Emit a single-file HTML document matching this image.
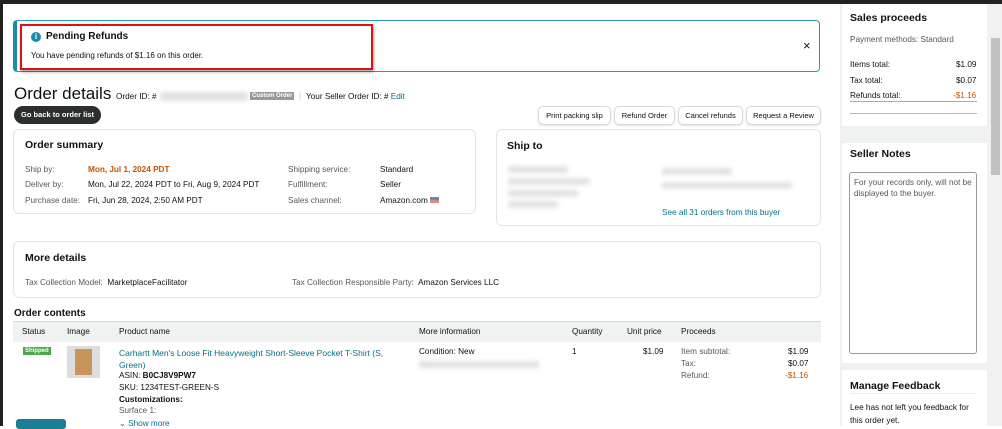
<!DOCTYPE html>
<html><head><meta charset="utf-8"><style>
*{box-sizing:border-box;margin:0;padding:0}
body{width:1002px;height:426px;overflow:hidden;background:#fff;font-family:"Liberation Sans",Arial,sans-serif;color:#0f1111;position:relative;font-size:8.2px}
.a{position:absolute;white-space:nowrap}
.box{position:absolute;border:1px solid #e3e6e6;border-radius:6px;background:#fff}
.g{color:#565959}
.lnk{color:#007185}
.btn{position:absolute;top:106px;height:19px;border:1px solid #d5d9d9;border-radius:5px;font-size:7.5px;line-height:17px;text-align:center;background:#fff;box-shadow:0 1px 2px rgba(0,0,0,.1)}
.blur{position:absolute;background:#e2e2e2;filter:blur(2px);border-radius:2px}
.h{font-weight:bold;font-size:10.5px}
</style></head><body>
<div class="a" style="left:0;top:0;width:1002px;height:4px;background:#222"></div>
<div class="a" style="left:0;top:0;width:3px;height:426px;background:#222"></div>
<div class="a" style="left:987px;top:4px;width:15px;height:422px;background:#f1f1f1"></div>
<div class="a" style="left:991px;top:38px;width:9px;height:137px;background:#c1c1c1"></div>
<div class="a" style="left:840px;top:4px;width:147px;height:422px;background:#f0f2f2"></div>
<div class="a" style="left:842px;top:4px;width:145px;height:122px;background:#fff"></div>
<div class="a" style="left:842px;top:143px;width:145px;height:220px;background:#fff"></div>
<div class="a" style="left:842px;top:370px;width:145px;height:56px;background:#fff"></div>
<div class="a h" style="left:850px;top:12px">Sales proceeds</div>
<div class="a g" style="left:850px;top:35px">Payment methods: Standard</div>
<div class="a" style="left:850px;top:60px">Items total:</div><div class="a" style="left:956px;top:60px">$1.09</div>
<div class="a" style="left:850px;top:76px">Tax total:</div><div class="a" style="left:956px;top:76px">$0.07</div>
<div class="a" style="left:850px;top:91px">Refunds total:</div><div class="a" style="left:953px;top:91px;color:#c45500">-$1.16</div>
<div class="a" style="left:850px;top:101px;width:127px;border-top:1px solid #aaa"></div>
<div class="a" style="left:850px;top:113px;width:127px;border-top:1px solid #bbb"></div>
<div class="a h" style="left:850px;top:148px">Seller Notes</div>
<div class="a" style="left:849px;top:172px;width:128px;height:182px;border:1px solid #999;border-radius:3px;white-space:normal;padding:4px 4px;color:#565959;line-height:11px">For your records only, will not be displayed to the buyer.</div>
<div class="a h" style="left:850px;top:380px">Manage Feedback</div>
<div class="a" style="left:850px;top:393px;width:127px;border-top:1px solid #eee"></div>
<div class="a" style="left:850px;top:401px;line-height:13px;white-space:normal;width:130px">Lee has not left you feedback for this order yet.</div>
<div class="a" style="left:13px;top:20px;width:807px;height:52px;border:1px solid #2a9bb0;border-left:4px solid #1a8ca3;border-radius:4px"></div>
<div class="a" style="left:20px;top:24px;width:353px;height:46px;border:2px solid #e01010;box-shadow:1px 2px 3px rgba(0,0,0,.35)"></div>
<div class="a" style="left:31px;top:32px;width:10px;height:10px;border-radius:50%;background:#1a8ca3;color:#fff;font-size:8px;font-weight:bold;text-align:center;line-height:10px">i</div>
<div class="a" style="left:46px;top:31px;font-weight:bold;font-size:10px">Pending Refunds</div>
<div class="a" style="left:31px;top:51px;font-size:8px">You have pending refunds of $1.16 on this order.</div>
<div class="a" style="left:803px;top:38px;font-size:13px">×</div>
<div class="a" style="left:14px;top:84px;font-size:17px">Order details</div>
<div class="a" style="left:116px;top:92px">Order ID: #</div>
<div class="blur" style="left:160px;top:92px;width:88px;height:9px"></div>
<div class="a" style="left:250px;top:92px;background:#999;color:#fff;font-size:6px;padding:1px 2px;font-weight:bold">Custom Order</div>
<div class="a" style="left:299px;top:91px;color:#ccc">|</div>
<div class="a" style="left:306px;top:92px">Your Seller Order ID: # <span class="lnk">Edit</span></div>
<div class="a" style="left:14px;top:106px;width:87px;height:18px;border-radius:9px;background:#2b2f2f;color:#fff;font-weight:bold;font-size:7.5px;line-height:18px;text-align:center">Go back to order list</div>
<div class="btn" style="left:538px;width:73px">Print packing slip</div>
<div class="btn" style="left:614px;width:61px">Refund Order</div>
<div class="btn" style="left:678px;width:65px">Cancel refunds</div>
<div class="btn" style="left:746px;width:75px">Request a Review</div>
<div class="box" style="left:13px;top:129px;width:463px;height:85px"></div>
<div class="a h" style="left:25px;top:139px">Order summary</div>
<div class="a g" style="left:25px;top:165px">Ship by:</div><div class="a" style="left:88px;top:165px;color:#c45500;font-weight:bold">Mon, Jul 1, 2024 PDT</div>
<div class="a g" style="left:25px;top:180px">Deliver by:</div><div class="a" style="left:88px;top:180px">Mon, Jul 22, 2024 PDT to Fri, Aug 9, 2024 PDT</div>
<div class="a g" style="left:25px;top:196px">Purchase date:</div><div class="a" style="left:88px;top:196px">Fri, Jun 28, 2024, 2:50 AM PDT</div>
<div class="a g" style="left:288px;top:165px">Shipping service:</div><div class="a" style="left:380px;top:165px">Standard</div>
<div class="a g" style="left:288px;top:180px">Fulfillment:</div><div class="a" style="left:380px;top:180px">Seller</div>
<div class="a g" style="left:288px;top:196px">Sales channel:</div><div class="a" style="left:380px;top:196px">Amazon.com <span style="display:inline-block;width:9px;height:6px;background:linear-gradient(#6a86c0 50%,#d88 50%)"></span></div>
<div class="box" style="left:496px;top:129px;width:325px;height:97px"></div>
<div class="a h" style="left:507px;top:140px">Ship to</div>
<div class="blur" style="left:508px;top:166px;width:60px;height:7px"></div>
<div class="blur" style="left:508px;top:178px;width:82px;height:7px"></div>
<div class="blur" style="left:508px;top:190px;width:70px;height:7px"></div>
<div class="blur" style="left:508px;top:201px;width:50px;height:7px"></div>
<div class="blur" style="left:662px;top:168px;width:70px;height:7px"></div>
<div class="blur" style="left:662px;top:182px;width:130px;height:7px"></div>
<div class="a lnk" style="left:662px;top:208px">See all 31 orders from this buyer</div>
<div class="box" style="left:13px;top:241px;width:808px;height:57px"></div>
<div class="a h" style="left:25px;top:252px">More details</div>
<div class="a" style="left:25px;top:278px"><span class="g">Tax Collection Model:</span>&nbsp; MarketplaceFacilitator</div>
<div class="a" style="left:292px;top:278px"><span class="g">Tax Collection Responsible Party:</span>&nbsp; Amazon Services LLC</div>
<div class="a" style="left:14px;top:308px;font-weight:bold;font-size:10px">Order contents</div>
<div class="a" style="left:13px;top:321px;width:808px;height:21px;background:#f0f2f2;border-top:1px solid #d5d9d9"></div>
<div class="a" style="left:22px;top:327px">Status</div>
<div class="a" style="left:67px;top:327px">Image</div>
<div class="a" style="left:119px;top:327px">Product name</div>
<div class="a" style="left:419px;top:327px">More information</div>
<div class="a" style="left:572px;top:327px">Quantity</div>
<div class="a" style="left:627px;top:327px">Unit price</div>
<div class="a" style="left:681px;top:327px">Proceeds</div>
<div class="a" style="left:23px;top:347px;background:#4aa846;color:#fff;font-size:6px;font-weight:bold;padding:1px 2px">Shipped</div>
<div class="a" style="left:67px;top:346px;width:33px;height:32px;background:#ddd"></div>
<div class="a" style="left:75px;top:349px;width:17px;height:26px;background:#c9945a"></div>
<div class="a lnk" style="left:119px;top:347px;line-height:12px;white-space:normal;width:280px;font-size:8.5px">Carhartt Men's Loose Fit Heavyweight Short-Sleeve Pocket T-Shirt (S, Green)</div>
<div class="a" style="left:119px;top:371px">ASIN: <b>B0CJ8V9PW7</b></div>
<div class="a" style="left:119px;top:383px">SKU: 1234TEST-GREEN-S</div>
<div class="a" style="left:119px;top:395px;font-weight:bold">Customizations:</div>
<div class="a g" style="left:119px;top:406px">Surface 1:</div>
<div class="a lnk" style="left:119px;top:418px">⌄ Show more</div>
<div class="a" style="left:16px;top:419px;width:50px;height:10px;background:#1a7f95;border-radius:3px"></div>
<div class="a" style="left:419px;top:347px">Condition: New</div>
<div class="blur" style="left:419px;top:361px;width:120px;height:7px"></div>
<div class="a" style="left:572px;top:347px">1</div>
<div class="a" style="left:643px;top:347px">$1.09</div>
<div class="a g" style="left:681px;top:347px">Item subtotal:</div><div class="a" style="left:788px;top:347px">$1.09</div>
<div class="a g" style="left:681px;top:359px">Tax:</div><div class="a" style="left:788px;top:359px">$0.07</div>
<div class="a g" style="left:681px;top:371px">Refund:</div><div class="a" style="left:785px;top:371px;color:#c45500">-$1.16</div>
</body></html>
